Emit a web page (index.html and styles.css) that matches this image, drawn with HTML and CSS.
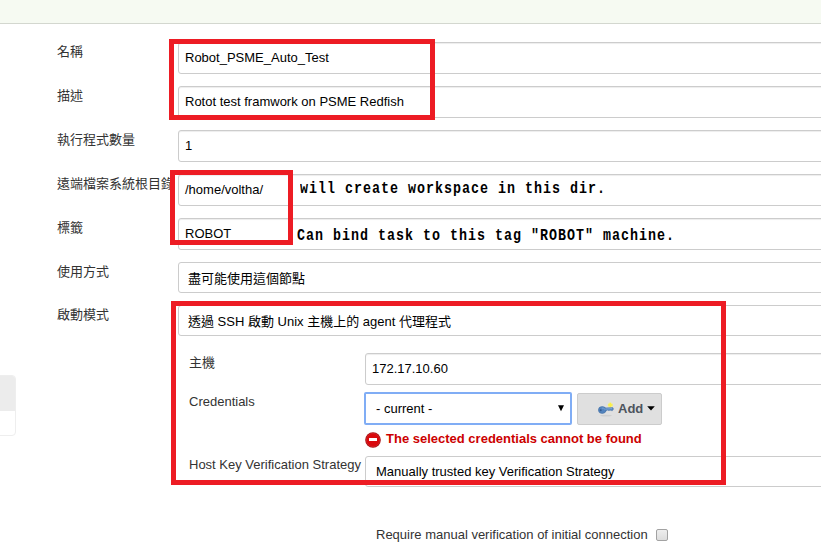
FILE: index.html
```html
<!DOCTYPE html>
<html lang="zh-Hant">
<head>
<meta charset="utf-8">
<title>Node configuration</title>
<link rel="stylesheet" href="styles.css">
</head>
<body>
<header class="topbar"></header>
<aside class="executors"><div class="executors-head"></div></aside>
<main class="form">
  <div class="row"><label class="label">名稱</label><div class="field">Robot_PSME_Auto_Test</div></div>
  <div class="row"><label class="label">描述</label><div class="field">Rotot test framwork on PSME Redfish</div></div>
  <div class="row"><label class="label">執行程式數量</label><div class="field">1</div></div>
  <div class="row"><label class="label">遠端檔案系統根目錄</label><div class="field">/home/voltha/</div></div>
  <div class="row"><label class="label">標籤</label><div class="field">ROBOT</div></div>
  <div class="row row-usage"><label class="label">使用方式</label><div class="field select select-zh">盡可能使用這個節點</div></div>
  <div class="row row-launch"><label class="label">啟動模式</label><div class="field select select-zh">透過 SSH 啟動 Unix 主機上的 agent 代理程式</div></div>
  <section class="nested">
    <div class="row row-host"><label class="label">主機</label><div class="field">172.17.10.60</div></div>
    <div class="row row-cred">
      <label class="label">Credentials</label>
      <div class="cred">
        <div class="cred-controls">
          <div class="dropdown"><span>- current -</span>
            <svg width="8" height="7" viewBox="0 0 8 7"><path d="M1 .3h6L4 6.3z" fill="#000"/></svg>
          </div>
          <button class="add" type="button">
            <svg class="key" width="16" height="16" viewBox="0 0 16 16">
              <ellipse cx="8" cy="14.6" rx="6" ry=".8" fill="#cfcfcf"/>
              <circle cx="12.3" cy="4" r="2.6" fill="#eeeb9c"/>
              <path d="M12.3 1.8v4.4M10.2 4h4.2" stroke="#fbf044" stroke-width="1.3"/>
              <path d="M6.5 7 14.8 6.6 15.5 8 14.5 9.6H13L12 8.9 11 9.8 9.8 9 7 10.5z" fill="#5a88c2" stroke="#4672a5" stroke-width=".5"/>
              <ellipse cx="4.2" cy="9" rx="3.8" ry="3.4" fill="#5283be" stroke="#4672a5" stroke-width=".6"/>
              <ellipse cx="2.7" cy="9.3" rx="1" ry="1" fill="#34598a"/>
              <path d="M3.8 7.1Q6 6.8 6.8 8.2L14 7.5" fill="none" stroke="#82a9d9" stroke-width=".8"/>
            </svg>
            <span>Add</span>
            <svg width="8" height="5" viewBox="0 0 8 5"><path d="M.2 .3h7.6L4 4.5z" fill="#000"/></svg>
          </button>
        </div>
        <div class="error">
          <svg width="16" height="16" viewBox="0 0 16 16">
            <circle cx="8" cy="8" r="7.8" fill="#a80f12"/>
            <circle cx="8" cy="8" r="6.7" fill="#d9090d" stroke="#d9383b" stroke-width=".5"/>
            <rect x="4" y="6" width="8" height="3" rx=".3" fill="#fff"/>
          </svg>
          <span>The selected credentials cannot be found</span>
        </div>
      </div>
    </div>
    <div class="row row-strategy"><label class="label">Host Key Verification Strategy</label><div class="field select">Manually trusted key Verification Strategy</div></div>
    <div class="verify"><span>Require manual verification of initial connection</span><i class="checkbox"></i></div>
  </section>
</main>
<div class="frame frame-name"></div>
<div class="frame frame-root"></div>
<div class="frame frame-ssh"></div>
<p class="note note-root">will create workspace in this dir.</p>
<p class="note note-tag">Can bind task to this tag "ROBOT" machine.</p>
</body>
</html>
```
FILE: styles.css
```css
* { box-sizing: border-box; }
body {
  margin: 0;
  width: 821px;
  height: 544px;
  overflow: hidden;
  position: relative;
  background: #fff;
  color: #333;
  font: 13px/18px "Liberation Sans", "Noto Sans CJK TC", sans-serif;
}
.topbar { height: 24px; background: #f6faf2; border-bottom: 1px solid #d3d7cf; }
.executors {
  position: absolute;
  left: -10px;
  top: 375px;
  width: 26px;
  height: 61px;
  border: 1px solid #eee;
  border-radius: 4px;
  overflow: hidden;
}
.executors-head { height: 35px; background: #ececec; }
.form { padding: 18px 0 0 57px; }
.row {
  display: grid;
  grid-template-columns: 121px 1fr;
  height: 44px;
  align-items: start;
}
.label { padding-top: 1px; white-space: nowrap; }
.field {
  height: 32px;
  margin-right: -10px;
  padding: 0 6px;
  border: 1px solid #ccc;
  border-radius: 3px;
  box-shadow: inset 0 1px 1px rgba(0, 0, 0, .075);
  color: #000;
  line-height: 30px;
  white-space: nowrap;
}
.select { height: 31px; padding-left: 10px; box-shadow: none; }
.select-zh { padding-left: 9px; line-height: 31px; }
.row-usage { height: 43px; }
.row-launch { height: 48px; }
.nested { padding-left: 132px; }
.nested .row { grid-template-columns: 176px 1fr; }
.nested .row-host { height: 39px; }
.nested .row-cred { height: 64px; }
.nested .row-strategy { height: 70px; }
.row-strategy .label { padding-top: 0; }
.cred { margin-left: -1px; }
.cred-controls { display: flex; gap: 5px; align-items: center; }
.dropdown {
  width: 208px;
  height: 33px;
  display: flex;
  align-items: center;
  justify-content: space-between;
  padding: 0 5px 0 10px;
  border: 2px solid #80adf5;
  border-radius: 2px;
  color: #000;
}
.add {
  width: 85px;
  height: 32px;
  display: flex;
  align-items: center;
  gap: 4px;
  padding: 0 0 0 20px;
  border: 1px solid #ccc;
  border-radius: 2px;
  background: #e0e0e0;
  color: #4d545d;
  font: bold 13px/18px "Liberation Sans", sans-serif;
}
.error {
  display: flex;
  gap: 5px;
  padding: 6px 0 0 1px;
  color: #c00;
  font-weight: bold;
  line-height: 15px;
}
.error svg { margin-top: 1px; }
.verify { display: flex; gap: 8px; align-items: center; padding-left: 187px; }
.checkbox {
  width: 12px;
  height: 12px;
  border: 1px solid #a2a2a2;
  border-radius: 2px;
  background: linear-gradient(#eee, #ddd);
}
.frame { position: absolute; border: 5px solid #ed1c24; }
.frame-name { left: 169px; top: 39px; width: 266px; height: 81px; }
.frame-root { left: 170px; top: 170px; width: 123px; height: 75px; }
.frame-ssh { left: 171px; top: 301px; width: 555px; height: 184px; }
.note {
  position: absolute;
  margin: 0;
  color: #000;
  font: bold 13.333px/18px "Liberation Mono", monospace;
  letter-spacing: 1px;
  transform: scaleY(1.25);
  white-space: nowrap;
}
.note-root { left: 300px; top: 180px; }
.note-tag { left: 297px; top: 227px; }
```
